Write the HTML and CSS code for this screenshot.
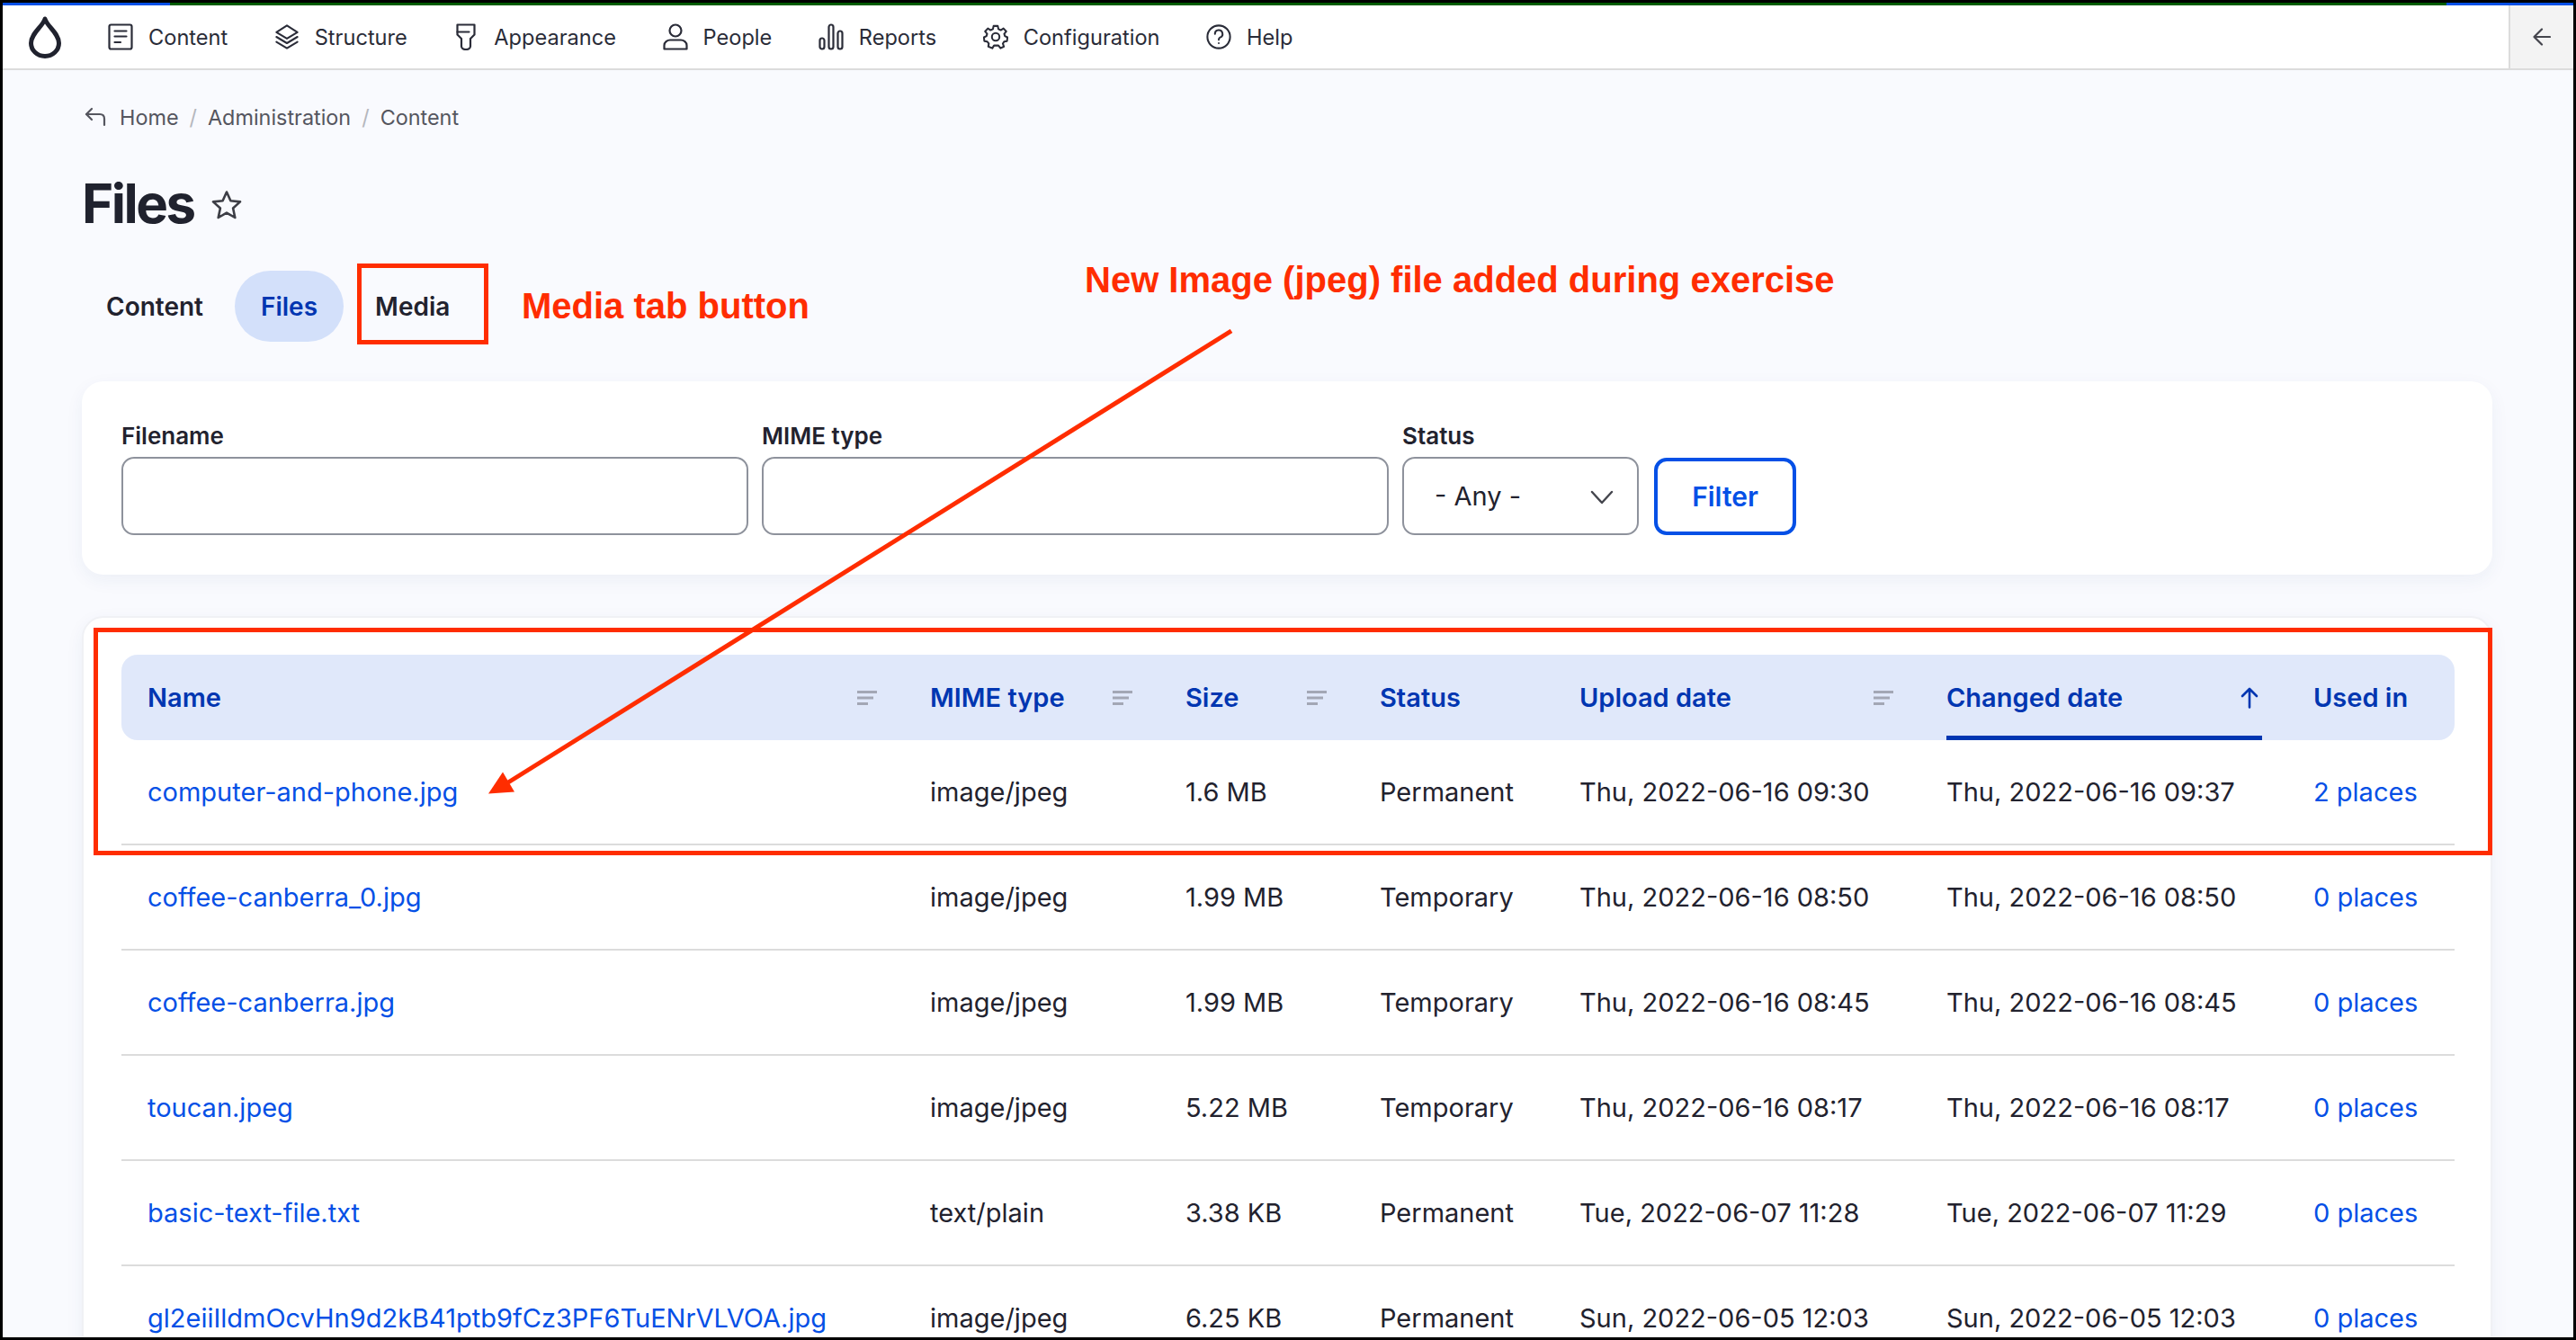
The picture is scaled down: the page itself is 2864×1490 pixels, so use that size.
FILE: index.html
```html
<!DOCTYPE html>
<html lang="en">
<head>
    <meta charset="UTF-8">
    <meta name="viewport" content="width=device-width, initial-scale=1.0">
    <title>Files | Drupal</title>
    <link rel="stylesheet" href="styles.css">
</head>
<body>
<div class="frame">
    <div class="strip"></div>
    <header class="toolbar">
        <a class="logo" href="#">
            <svg width="36" height="48" viewBox="0 0 36 48" fill="none" stroke="currentColor" stroke-width="5"><path d="M18 4C20 12 33.500 20 33.500 31A15.500 14.500 0 0 1 2.500 31C2.500 20 16 12 18 4Z" stroke-linejoin="round"/></svg>
        </a>
        <nav class="nav">
            <a href="#"><svg viewBox="0 0 28 30" fill="none" stroke="currentColor" stroke-width="2.200" stroke-linecap="round"><rect x="1.500" y="1.500" width="25" height="27" rx="2"/><path d="M7.500 8.500H20.500M7.500 14.500H20.500M7.500 21H14"/></svg>Content</a>
            <a href="#"><svg viewBox="0 0 30 30" fill="none" stroke="currentColor" stroke-width="2.200" stroke-linejoin="round" stroke-linecap="round"><path d="M15 1.500L27.500 9.500 15 17 2.500 9.500Z"/><path d="M2.500 15L15 22.500 27.500 15"/><path d="M2.500 21L15 28.500 27.500 21"/></svg>Structure</a>
            <a href="#"><svg viewBox="0 0 28 30" fill="none" stroke="currentColor" stroke-width="2.200" stroke-linejoin="round" stroke-linecap="round"><path d="M4.500 1.500H23.500V12.500L19 17V25.500A5 3.500 0 0 1 9 25.500V17L4.500 12.500Z"/><path d="M4.500 9.500H17.500"/></svg>Appearance</a>
            <a href="#"><svg viewBox="0 0 28 30" fill="none" stroke="currentColor" stroke-width="2.200" stroke-linejoin="round"><circle cx="14" cy="8" r="6.500"/><path d="M1.500 28.500V24.500C1.500 21 5 18.500 8 18.500H20C23 18.500 26.500 21 26.500 24.500V28.500Z"/></svg>People</a>
            <a href="#"><svg viewBox="0 0 28 30" fill="none" stroke="currentColor" stroke-width="2.200"><rect x="1.500" y="16.500" width="5" height="12" rx="2.500"/><rect x="11.500" y="1.500" width="5" height="27" rx="2.500"/><rect x="21.500" y="8.500" width="5" height="20" rx="2.500"/></svg>Reports</a>
            <a href="#"><svg viewBox="0 0 30 30" fill="none" stroke="currentColor" stroke-width="2.200" stroke-linejoin="round"><circle cx="15" cy="15" r="4.500"/><path d="M12.500 2H17.500L18.300 5.800 21 7 24.300 4.900 27.600 8.500 25.200 11.500 26 14 29 15.500 28.500 20 25 20.700 23.500 23 24.800 26.500 20.800 28.500 18.300 25.300H13L11 28.500 6.200 26.500 6.800 23 5 20.700 1.500 20 1 15.500 4 14 4.800 11.500 2.400 8.500 5.700 4.900 9 7 11.700 5.800Z"/></svg>Configuration</a>
            <a href="#"><svg viewBox="0 0 30 30" fill="none" stroke="currentColor" stroke-width="2.200" stroke-linecap="round"><circle cx="15" cy="15" r="13.500"/><path d="M10.500 11.500A4.500 4.500 0 1 1 16.500 15.700C15.300 16.300 15 17 15 18.500"/><path d="M15 22.500V22.600"/></svg>Help</a>
        </nav>
        <button class="collapse" type="button">
            <svg width="20" height="20" viewBox="0 0 20 20" fill="none" stroke="currentColor" stroke-width="2.200" stroke-linecap="round" stroke-linejoin="round"><path d="M19 10H1.500M10 1.500L1.500 10 10 18.500"/></svg>
        </button>
    </header>

    <main class="page">
        <div class="breadcrumb">
            <svg width="24" height="22" viewBox="0 0 24 22" fill="none" stroke="currentColor" stroke-width="2.200" stroke-linecap="round" stroke-linejoin="round"><path d="M8 2L2 8 8 14"/><path d="M2 8H17C20 8 22 10 22 13V20"/></svg>
            <a href="#">Home</a><span class="sep">/</span><a href="#">Administration</a><span class="sep">/</span><a href="#">Content</a>
        </div>

        <div class="title-row">
            <h1>Files</h1>
            <svg width="34" height="34" viewBox="0 0 34 34" fill="none" stroke="currentColor" stroke-width="2.600" stroke-linejoin="round"><path d="M17 2.500L21.400 12.300 32 13.400 24.100 20.500 26.300 31 17 25.600 7.700 31 9.900 20.500 2 13.400 12.600 12.300Z"/></svg>
        </div>

        <div class="tabs">
            <a href="#">Content</a>
            <a href="#" class="active">Files</a>
            <a href="#">Media</a>
        </div>

        <section class="card filter-card">
            <div class="field field-wide">
                <label for="filename">Filename</label>
                <input type="text" id="filename">
            </div>
            <div class="field field-wide">
                <label for="mime">MIME type</label>
                <input type="text" id="mime">
            </div>
            <div class="field field-select">
                <label for="status">Status</label>
                <div class="select-wrap">
                    <select id="status"><option>- Any -</option></select>
                    <svg width="26" height="16" viewBox="0 0 26 16" fill="none" stroke="currentColor" stroke-width="2.400" stroke-linecap="round" stroke-linejoin="round"><path d="M2 2L13 14 24 2"/></svg>
                </div>
            </div>
            <button class="filter-btn" type="button">Filter</button>
        </section>

        <section class="card table-card">
            <table>
                <thead>
                    <tr>
                        <th class="col-name"><div>Name <svg class="sort" viewBox="0 0 22 16"><path d="M0 0H22V3H0ZM0 6.500H18V9.500H0ZM0 13H12V16H0Z"/></svg></div></th>
                        <th class="col-mime"><div>MIME type <svg class="sort" viewBox="0 0 22 16"><path d="M0 0H22V3H0ZM0 6.500H18V9.500H0ZM0 13H12V16H0Z"/></svg></div></th>
                        <th class="col-size"><div>Size <svg class="sort" viewBox="0 0 22 16"><path d="M0 0H22V3H0ZM0 6.500H18V9.500H0ZM0 13H12V16H0Z"/></svg></div></th>
                        <th class="col-status"><div>Status</div></th>
                        <th class="col-upload"><div>Upload date <svg class="sort" viewBox="0 0 22 16"><path d="M0 0H22V3H0ZM0 6.500H18V9.500H0ZM0 13H12V16H0Z"/></svg></div></th>
                        <th class="col-changed sorted"><div>Changed date <svg class="arrow" width="20" height="24" viewBox="0 0 20 24" fill="none" stroke="currentColor" stroke-width="2.600" stroke-linecap="round" stroke-linejoin="round"><path d="M10 22.500V2M2 10L10 2 18 10"/></svg></div></th>
                        <th class="col-used"><div>Used in</div></th>
                    </tr>
                </thead>
                <tbody>
                    <tr>
                        <td><a href="#">computer-and-phone.jpg</a></td>
                        <td>image/jpeg</td><td>1.6 MB</td><td>Permanent</td>
                        <td>Thu, 2022-06-16 09:30</td><td>Thu, 2022-06-16 09:37</td>
                        <td><a href="#">2 places</a></td>
                    </tr>
                    <tr>
                        <td><a href="#">coffee-canberra_0.jpg</a></td>
                        <td>image/jpeg</td><td>1.99 MB</td><td>Temporary</td>
                        <td>Thu, 2022-06-16 08:50</td><td>Thu, 2022-06-16 08:50</td>
                        <td><a href="#">0 places</a></td>
                    </tr>
                    <tr>
                        <td><a href="#">coffee-canberra.jpg</a></td>
                        <td>image/jpeg</td><td>1.99 MB</td><td>Temporary</td>
                        <td>Thu, 2022-06-16 08:45</td><td>Thu, 2022-06-16 08:45</td>
                        <td><a href="#">0 places</a></td>
                    </tr>
                    <tr>
                        <td><a href="#">toucan.jpeg</a></td>
                        <td>image/jpeg</td><td>5.22 MB</td><td>Temporary</td>
                        <td>Thu, 2022-06-16 08:17</td><td>Thu, 2022-06-16 08:17</td>
                        <td><a href="#">0 places</a></td>
                    </tr>
                    <tr>
                        <td><a href="#">basic-text-file.txt</a></td>
                        <td>text/plain</td><td>3.38 KB</td><td>Permanent</td>
                        <td>Tue, 2022-06-07 11:28</td><td>Tue, 2022-06-07 11:29</td>
                        <td><a href="#">0 places</a></td>
                    </tr>
                    <tr>
                        <td><a href="#">gl2eiiIldmOcvHn9d2kB41ptb9fCz3PF6TuENrVLVOA.jpg</a></td>
                        <td>image/jpeg</td><td>6.25 KB</td><td>Permanent</td>
                        <td>Sun, 2022-06-05 12:03</td><td>Sun, 2022-06-05 12:03</td>
                        <td><a href="#">0 places</a></td>
                    </tr>
                </tbody>
            </table>
        </section>
    </main>

    <!-- red annotations drawn on top of the screenshot -->
    <div class="mark mark-tab"></div>
    <div class="mark mark-row"></div>
    <span class="note note-tab">Media tab button</span>
    <span class="note note-file">New Image (jpeg) file added during exercise</span>
    <svg class="pointer" width="840" height="530" viewBox="0 0 840 530"><path d="M829 2L25 504" stroke="#ff2d00" stroke-width="5" fill="none"/><path d="M3 516.500L19 492.500 32 514.500Z" fill="#ff2d00"/></svg>
</div>
</body>
</html>
```

FILE: styles.css
```css
* {
    margin: 0;
    padding: 0;
    box-sizing: border-box;
    font-family: Inter, 'Liberation Sans', sans-serif;
}

body {
    background: #000;
    color: #22222e;
    overflow: hidden;
}

a {
    color: inherit;
    text-decoration: none;
}

.frame {
    position: relative;
    height: 100vh;
    border: 3px solid #000;
    background: #f9fafe;
    overflow: hidden;
}

.strip {
    height: 3px;
    background: linear-gradient(to right, #0550e6 186px, #005c00 186px, #005c00 2717px, #0550e6 2717px);
}

.toolbar {
    display: flex;
    align-items: center;
    height: 72px;
    background: #fff;
    border-bottom: 2px solid #dcdcdc;
}

.logo {
    display: flex;
    margin-left: 29px;
    width: 88px;
    color: #20222e;
}

.nav {
    display: flex;
    align-items: center;
    gap: 51.500px;
    flex: 1;
}

.nav a {
    display: flex;
    align-items: center;
    gap: 17px;
    font-size: 23.600px;
    color: #2a2c38;
}

.nav svg {
    width: 28px;
    height: 30px;
}

.collapse {
    display: flex;
    align-items: center;
    justify-content: center;
    width: 72px;
    height: 100%;
    background: #f3f3f3;
    border: none;
    border-left: 2px solid #dcdcdc;
    color: #44454d;
}

.page {
    padding: 0 90px 0 88px;
}

.breadcrumb {
    display: flex;
    align-items: center;
    height: 24px;
    margin-top: 40px;
    padding-left: 3px;
    font-size: 23.400px;
    color: #55565f;
}

.breadcrumb svg {
    margin-right: 15px;
}

.sep {
    margin: 0 12px;
    color: #b5b7bd;
}

.title-row {
    display: flex;
    align-items: center;
    gap: 19px;
    margin-top: 48px;
    height: 72px;
}

.title-row svg {
    color: #3d3e46;
    margin-top: 4px;
}

h1 {
    font-size: 60px;
    font-weight: 700;
    letter-spacing: -2.500px;
    color: #20222e;
}

.tabs {
    display: flex;
    gap: 6px;
    margin: 39px 0 0 -2px;
}

.tabs a {
    display: flex;
    align-items: center;
    height: 79px;
    padding: 0 29px;
    border-radius: 40px;
    font-size: 28px;
    font-weight: 600;
}

.tabs a.active {
    background: #d3e0fa;
    color: #0036b1;
}

.card {
    background: #fff;
    border-radius: 24px;
    box-shadow: 0 6px 20px rgba(40, 60, 120, 0.06);
}

.filter-card {
    display: flex;
    align-items: flex-end;
    gap: 15px;
    margin-top: 44px;
    padding: 45px 44px 44px;
}

.field label {
    display: block;
    margin-bottom: 7px;
    font-size: 26px;
    line-height: 32px;
    font-weight: 600;
}

.field-wide {
    width: 697px;
}

.field-select {
    width: 263px;
}

.field input,
.field select {
    display: block;
    width: 100%;
    height: 87px;
    background: #fff;
    border: 2px solid #8e929c;
    border-radius: 14px;
    outline: none;
}

.select-wrap {
    position: relative;
}

.field select {
    appearance: none;
    padding-left: 34px;
    font-size: 29px;
    color: #22222e;
}

.select-wrap svg {
    position: absolute;
    right: 28px;
    top: 37px;
    color: #44454d;
}

.filter-btn {
    width: 158px;
    height: 86px;
    margin-left: 2px;
    background: #fff;
    border: 4px solid #0550e6;
    border-radius: 14px;
    color: #0550e6;
    font-size: 30px;
    font-weight: 600;
}

.table-card {
    margin-top: 46px;
    padding: 41px 40px 0 42px;
    border: 2px solid #f0f1f5;
}

table {
    table-layout: fixed;
    width: 2594px;
    border-collapse: separate;
    border-spacing: 0;
    font-size: 29px;
}

.col-name { width: 870px; }
.col-mime { width: 284px; }
.col-size { width: 216px; }
.col-status { width: 222px; }
.col-upload { width: 408px; }
.col-changed { width: 408px; }
.col-used { width: 186px; }

th {
    height: 95px;
    padding: 0 30px 0 29px;
    background: #e0e8fa;
    color: #0036b1;
    text-align: left;
    font-size: 29px;
    font-weight: 600;
}

th:first-child {
    border-radius: 18px 0 0 18px;
}

th:last-child {
    border-radius: 0 18px 18px 0;
}

th div {
    display: flex;
    align-items: center;
    justify-content: space-between;
    height: 95px;
}

th.sorted {
    padding-right: 28px;
}

th.sorted div {
    border-bottom: 5px solid #0036b1;
    padding-top: 5px;
    padding-right: 4px;
}

.sort {
    width: 22px;
    height: 16px;
    fill: #a3a7b5;
}

td {
    height: 117px;
    padding: 0 29px;
    border-bottom: 2px solid #dcdcdc;
    white-space: nowrap;
}

td a {
    color: #0550e6;
}

.mark {
    position: absolute;
    border: 5px solid #ff2d00;
}

.mark-tab {
    left: 394px;
    top: 290px;
    width: 146px;
    height: 90px;
}

.mark-row {
    left: 101px;
    top: 695px;
    width: 2667px;
    height: 253px;
}

.note {
    position: absolute;
    font-family: 'Liberation Sans', sans-serif;
    font-size: 40px;
    font-weight: 700;
    line-height: 46px;
    color: #ff2d00;
    white-space: nowrap;
}

.note-tab {
    left: 577px;
    top: 314px;
}

.note-file {
    left: 1203px;
    top: 285px;
}

.pointer {
    position: absolute;
    left: 537px;
    top: 363px;
}
```
